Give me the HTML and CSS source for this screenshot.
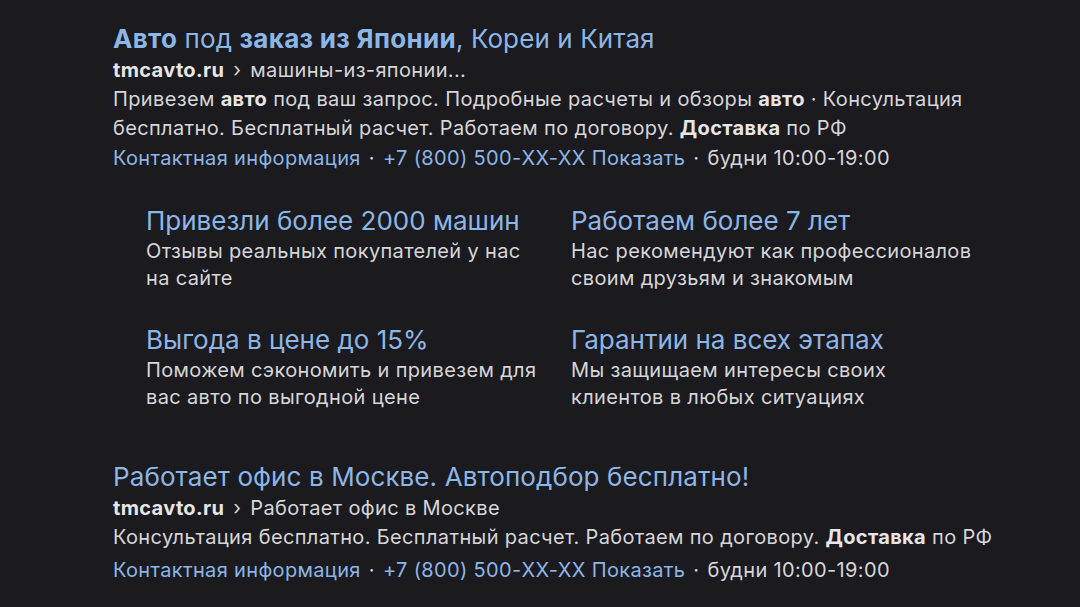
FILE: index.html
```html
<!DOCTYPE html>
<html lang="ru">

<head>
    <meta charset="UTF-8">
    <meta name="viewport" content="width=device-width, initial-scale=1.0">
    <title>Авто под заказ</title>
    <link rel="stylesheet" href="styles.css">
</head>

<body>
    <div class="results">
        <div class="ad">
            <a class="ad-title" href="#"><b>Авто</b> под <b>заказ из Японии</b>, Кореи и Китая</a>
            <div class="ad-url"><b>tmcavto.ru</b><span class="sep">›</span>машины-из-японии...</div>
            <p class="ad-text">Привезем <b>авто</b> под ваш запрос. Подробные расчеты и обзоры <b>авто</b> · Консультация
                бесплатно. Бесплатный расчет. Работаем по договору. <b>Доставка</b> по РФ</p>
            <div class="ad-contacts">
                <a href="#">Контактная информация</a>
                <span class="dot">·</span>
                <a href="#">+7 (800) 500-XX-XX Показать</a>
                <span class="dot">·</span>
                <span>будни 10:00-19:00</span>
            </div>

            <div class="sitelinks">
                <div class="sitelink">
                    <a href="#">Привезли более 2000 машин</a>
                    <p>Отзывы реальных покупателей у нас на сайте</p>
                </div>
                <div class="sitelink">
                    <a href="#">Работаем более 7 лет</a>
                    <p>Нас рекомендуют как профессионалов своим друзьям и знакомым</p>
                </div>
                <div class="sitelink">
                    <a href="#">Выгода в цене до 15%</a>
                    <p>Поможем сэкономить и привезем для вас авто по выгодной цене</p>
                </div>
                <div class="sitelink">
                    <a href="#">Гарантии на всех этапах</a>
                    <p>Мы защищаем интересы своих клиентов в любых ситуациях</p>
                </div>
            </div>
        </div>

        <div class="ad">
            <a class="ad-title" href="#">Работает офис в Москве. Автоподбор бесплатно!</a>
            <div class="ad-url"><b>tmcavto.ru</b><span class="sep">›</span>Работает офис в Москве</div>
            <p class="ad-text">Консультация бесплатно. Бесплатный расчет. Работаем по договору. <b>Доставка</b> по РФ</p>
            <div class="ad-contacts ad-contacts-spaced">
                <a href="#">Контактная информация</a>
                <span class="dot">·</span>
                <a href="#">+7 (800) 500-XX-XX Показать</a>
                <span class="dot">·</span>
                <span>будни 10:00-19:00</span>
            </div>
        </div>
    </div>
</body>

</html>
```

FILE: styles.css
```css
* {
    margin: 0;
    padding: 0;
    box-sizing: border-box;
}

body {
    background: #1b1a1e;
    color: #d6d6d8;
    font-family: 'Inter', 'Noto Sans', sans-serif;
    font-size: 20px;
    letter-spacing: 0.35px;
}

a {
    color: #8cb6e6;
    text-decoration: none;
}

.results {
    padding: 23px 0 0 113px;
}

.ad {
    margin-bottom: 50px;
}

.ad:last-child {
    margin-bottom: 0;
}

.ad-title {
    display: block;
    font-size: 26px;
    line-height: 32px;
    letter-spacing: 0.1px;
}

.ad-title b {
    font-weight: 700;
    letter-spacing: 0.3px;
}

.ad-url {
    line-height: 30px;
}

.ad-url .sep {
    margin: 0 9px;
}

.ad-url b,
.ad-text b {
    font-weight: 700;
    color: #e6e6e8;
}

.ad-text {
    line-height: 29px;
    width: 900px;
}

.ad-contacts {
    line-height: 31px;
}

.ad-contacts-spaced {
    margin-top: 3px;
}

.ad-contacts .dot {
    margin: 0 2px;
}

.sitelinks {
    display: grid;
    grid-template-columns: 425px 425px;
    row-gap: 31px;
    margin: 30px 0 0 33px;
}

.sitelink a {
    display: block;
    font-size: 26px;
    line-height: 34px;
    letter-spacing: 0;
}

.sitelink p {
    line-height: 27px;
    width: 404px;
}
```
